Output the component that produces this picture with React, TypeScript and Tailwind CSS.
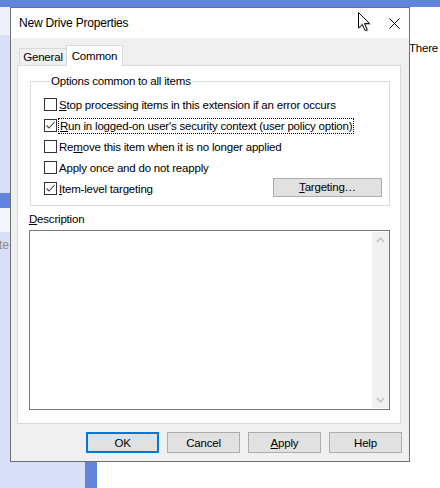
import React from 'react';

const Check = ({ checked }: { checked?: boolean }) => (
  <div className="w-[13px] h-[13px] border border-[#333333] bg-white shrink-0 flex items-center justify-center">
    {checked && (
      <svg width="11" height="11" viewBox="0 0 11 11">
        <path d="M1.5 5.5 L4 8 L9.5 2" fill="none" stroke="#444" strokeWidth="1.1" />
      </svg>
    )}
  </div>
);

const Row = ({ checked, children }: { checked?: boolean; children: React.ReactNode }) => (
  <div className="h-[21px] flex items-center">
    <Check checked={checked} />
    <div className="ml-[2px] flex items-center">{children}</div>
  </div>
);

const Btn = ({ children, focused }: { children: React.ReactNode; focused?: boolean }) => (
  <div
    className={
      focused
        ? 'w-[73px] h-[21px] border-2 border-[#0078d7] bg-[#e1e1e1] flex items-center justify-center'
        : 'w-[73px] h-[21px] border border-[#adadad] bg-[#e1e1e1] flex items-center justify-center'
    }
  >
    {children}
  </div>
);

const Cursor = () => (
  <svg className="absolute left-[357px] top-[11px]" width="16" height="22" viewBox="0 0 16 22">
    <path d="M2.5 2.5 L2.5 18.5 L6.5 14.8 L9.3 21 L11.6 20 L8.9 13.9 L14 13.9 Z" fill="#9a9a9a" opacity="0.5" />
    <path d="M1.5 1.5 L1.5 17 L5.3 13.4 L8.1 19.6 L10.2 18.7 L7.5 12.6 L12.6 12.6 Z" fill="#fff" stroke="#000" strokeWidth="1" strokeLinejoin="miter" />
  </svg>
);

export default function App() {
  return (
    <div className="relative w-[440px] h-[488px] overflow-hidden bg-white font-['Liberation_Sans',Arial,sans-serif] text-[11.5px] tracking-[-0.2px] leading-[14px] text-black">
      {/* page behind the dialog */}
      <div className="flex flex-col h-full">
        <div className="h-[7px] bg-[#6384dc] shrink-0" />
        <div className="flex flex-1">
          <div className="w-[85px] shrink-0 flex flex-col bg-[#d8dff6]">
            <div className="h-[28px] bg-[#eef1fb]" />
            <div className="h-[158px]" />
            <div className="h-[15px] bg-[#6384dc]" />
            <div className="h-[24px] bg-[#f4f6fd]" />
            <div className="pt-[6px] text-[#8c8c8c] -ml-[1px] text-[12px]">te</div>
          </div>
          <div className="w-[12px] shrink-0 bg-[#6384dc]" />
          <div className="flex-1 min-w-0 bg-white pl-[312px] pt-[34px] whitespace-nowrap">There are</div>
        </div>
      </div>

      {/* dialog */}
      <div className="absolute left-[10px] top-[7px] w-[400px] border border-[#707070] bg-[#f0f0f0] flex flex-col">
        <div className="h-[30px] bg-white flex items-center pl-[8px] pr-[9px] text-[12px]">
          <span>New Drive Properties</span>
          <svg className="ml-auto" width="11" height="11" viewBox="0 0 11 11">
            <path d="M0.5 0.5 L10.5 10.5 M10.5 0.5 L0.5 10.5" stroke="#000" strokeWidth="1" />
          </svg>
        </div>

        <div className="pl-[6px]">
          <div className="relative z-10 h-[27px] flex items-end pl-[2px]">
            <div className="w-[48px] h-[17px] border border-b-0 border-[#d9d9d9] bg-[#f0f0f0] flex items-center justify-center">
              General
            </div>
            <div className="w-[57px] h-[21px] -ml-px -mb-px border border-b-0 border-[#d9d9d9] bg-white flex items-start justify-center pt-[3px]">
              Common
            </div>
          </div>

          <div className="w-[384px] h-[359px] border border-[#d9d9d9] bg-white pl-[12px] pr-[10px] pt-[8px]">
            <fieldset className="border border-[#dcdcdc] pl-[13px] pr-[7px] pb-[6px] pt-[6px]">
              <legend className="ml-[6px] px-[1px] leading-[14px]">Options common to all items</legend>
              <Row>
                <span><span className="underline">S</span>top processing items in this extension if an error occurs</span>
              </Row>
              <Row checked>
                <span className="border border-dotted border-black px-[1px] -ml-[1px] leading-[14px]">
                  <span className="underline">R</span>un in logged-on user's security context (user policy option)
                </span>
              </Row>
              <Row>
                <span>Re<span className="underline">m</span>ove this item when it is no longer applied</span>
              </Row>
              <Row>
                <span>Apply once and do not reapply</span>
              </Row>
              <div className="h-[21px] flex items-center">
                <Check checked />
                <span className="ml-[2px]"><span className="underline">I</span>tem-level targeting</span>
                <div className="ml-auto w-[109px] h-[19px] -mt-[3px] border border-[#adadad] bg-[#e1e1e1] flex items-center justify-center">
                  <span><span className="underline">T</span>argeting…</span>
                </div>
              </div>
            </fieldset>

            <div className="mt-[6px] -ml-[1px]">
              <span className="underline">D</span>escription
            </div>
            <div className="mt-[4px] -ml-[1px] w-[361px] h-[180px] border border-[#7a7a7a] bg-white flex">
              <div className="flex-1" />
              <div className="w-[17px] my-[1px] bg-[#f0f0f0] flex flex-col justify-between items-center py-[5px]">
                <svg width="9" height="6" viewBox="0 0 9 6">
                  <path d="M0.8 5 L4.5 1.3 L8.2 5" fill="none" stroke="#c2c2c2" strokeWidth="1.6" />
                </svg>
                <svg width="9" height="6" viewBox="0 0 9 6">
                  <path d="M0.8 1 L4.5 4.7 L8.2 1" fill="none" stroke="#c2c2c2" strokeWidth="1.6" />
                </svg>
              </div>
            </div>
          </div>
        </div>

        <div className="flex justify-end gap-[8px] pr-[7px] mt-[8px] mb-[8px]">
          <Btn focused>OK</Btn>
          <Btn>Cancel</Btn>
          <Btn><span><span className="underline">A</span>pply</span></Btn>
          <Btn>Help</Btn>
        </div>
      </div>

      <Cursor />
    </div>
  );
}
